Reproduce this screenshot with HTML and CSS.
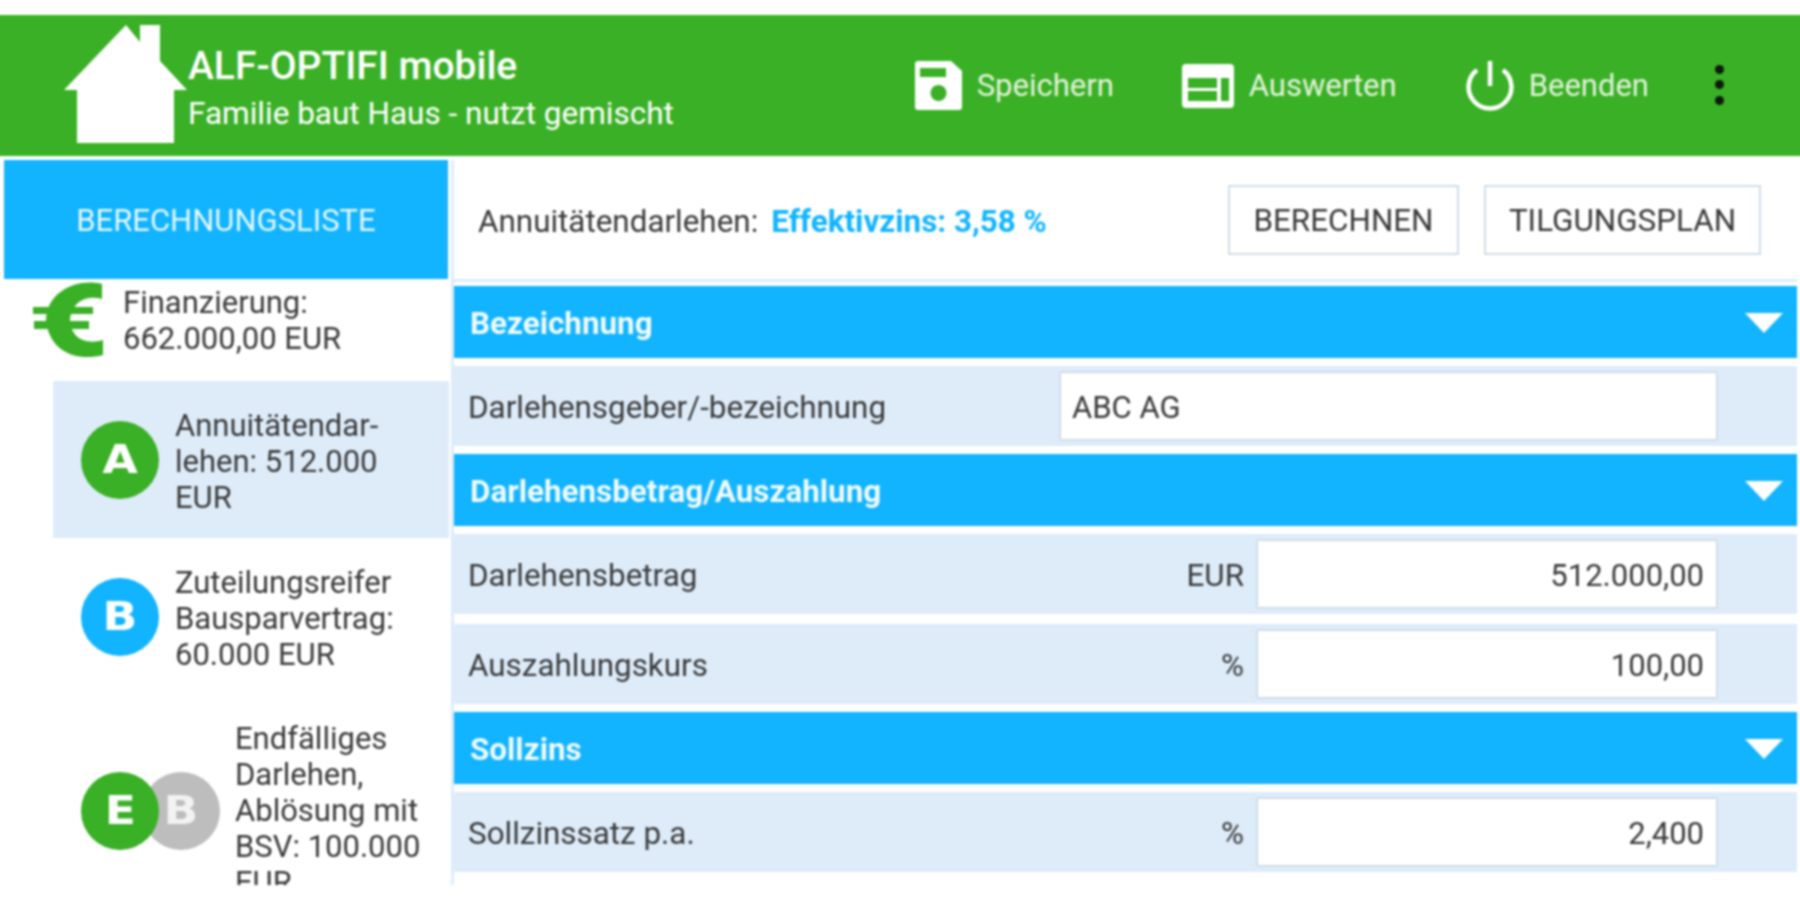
FILE: index.html
```html
<!DOCTYPE html>
<html lang="de">
<head>
<meta charset="utf-8">
<title>ALF-OPTIFI mobile</title>
<link rel="stylesheet" href="styles.css">
</head>
<body>
<div class="app">
  <header class="topbar">
    <svg class="house" viewBox="0 0 123 118"><path d="M0 65 L62 0 L76 17 L76 0 L96 0 L96 36 L123 65 L110 65 L110 118 L13 118 L13 65 Z" fill="#fff"/></svg>
    <div class="brand">
      <div class="brand-title">ALF-OPTIFI mobile</div>
      <div class="brand-sub">Familie baut Haus - nutzt gemischt</div>
    </div>
    <nav class="actions">
      <div class="action action-save">
        <svg class="ico-save" viewBox="0 0 47 49"><path fill-rule="evenodd" fill="#fff" d="M3 0 H36 L47 10 V46 a3 3 0 0 1 -3 3 H3 a3 3 0 0 1 -3 -3 V3 a3 3 0 0 1 3 -3 Z M5 7 V16 H31 V7 Z M23.5 24 a8 8 0 1 0 0.01 0 Z"/></svg>
        <span>Speichern</span>
      </div>
      <div class="action action-eval">
        <svg class="ico-eval" viewBox="0 0 52 44"><path fill-rule="evenodd" fill="#fff" d="M4 0 H48 a4 4 0 0 1 4 4 V40 a4 4 0 0 1 -4 4 H4 a4 4 0 0 1 -4 -4 V4 a4 4 0 0 1 4 -4 Z M6 14 V24 H35 V14 Z M6 27 V37 H35 V27 Z M39 14 V37 H47 V14 Z"/></svg>
        <span>Auswerten</span>
      </div>
      <div class="action action-quit">
        <svg class="ico-power" viewBox="0 0 48 50"><path d="M11 9 A21.400 21.400 0 1 0 37 9" fill="none" stroke="#fff" stroke-width="4.500"/><path d="M24 0 V25" stroke="#fff" stroke-width="4.500"/></svg>
        <span>Beenden</span>
      </div>
      <div class="dots"><i></i><i></i><i></i></div>
    </nav>
  </header>

  <div class="content">
    <aside class="sidebar">
      <div class="list-btn">BERECHNUNGSLISTE</div>
      <div class="total">
        <svg class="euro" viewBox="0 0 71 76"><path fill="#3ab026" d="M69 2 V17 C54 13 39 19 37 38 C38 57 54 63 70 58 V73 C44 80 16 70 13 38 C14 8 46 -4 69 2 Z"/><path fill="#3ab026" d="M0 25 H60 V32 H0 Z M1 39 H56 V47 H1 Z"/></svg>
        <div class="total-text">Finanzierung:<br>662.000,00 EUR</div>
      </div>
      <div class="loan loan-active">
        <div class="badge badge-green"><span class="letter">A</span></div>
        <div class="loan-text">Annuitätendar-<br>lehen: 512.000<br>EUR</div>
      </div>
      <div class="loan">
        <div class="badge badge-blue"><span class="letter">B</span></div>
        <div class="loan-text">Zuteilungsreifer<br>Bausparvertrag:<br>60.000 EUR</div>
      </div>
      <div class="loan loan-double">
        <div class="badge-pair">
          <div class="badge badge-green badge-front"><span class="letter">E</span></div>
          <div class="badge badge-grey"><span class="letter">B</span></div>
        </div>
        <div class="loan-text">Endfälliges<br>Darlehen,<br>Ablösung mit<br>BSV: 100.000<br>EUR</div>
      </div>
    </aside>

    <main class="panel">
      <div class="toolbar">
        <span class="tool-label">Annuitätendarlehen:</span>
        <span class="tool-rate">Effektivzins: 3,58 %</span>
        <button class="btn btn-calc">BERECHNEN</button>
        <button class="btn btn-plan">TILGUNGSPLAN</button>
      </div>

      <div class="section">Bezeichnung<i class="caret"></i></div>
      <div class="row">
        <span class="row-label">Darlehensgeber/-bezeichnung</span>
        <div class="field field-wide">ABC AG</div>
      </div>

      <div class="section">Darlehensbetrag/Auszahlung<i class="caret"></i></div>
      <div class="row">
        <span class="row-label">Darlehensbetrag</span>
        <span class="unit">EUR</span>
        <div class="field">512.000,00</div>
      </div>
      <div class="row">
        <span class="row-label">Auszahlungskurs</span>
        <span class="unit">%</span>
        <div class="field">100,00</div>
      </div>

      <div class="section">Sollzins<i class="caret"></i></div>
      <div class="row">
        <span class="row-label">Sollzinssatz p.a.</span>
        <span class="unit">%</span>
        <div class="field">2,400</div>
      </div>
      <div class="panel-end"></div>
    </main>
  </div>
</div>
</body>
</html>
```

FILE: styles.css
```css
* { box-sizing: border-box; }
html, body { margin: 0; height: 100%; background: #fff; overflow: hidden; }
body { font-family: Roboto, "Liberation Sans", sans-serif; color: #3a3a3a; }
.app { width: 1806px; height: 900px; margin-left: -3px; padding-top: 15px; display: flex; flex-direction: column; filter: blur(0.8px); }

.topbar { height: 141px; flex: none; background: #3ab026; color: #fff; display: flex; align-items: center; padding-left: 67px; padding-right: 3px; }
.house { width: 123px; height: 118px; margin-top: -3px; flex: none; }
.brand { margin-left: 1px; margin-top: 5px; }
.brand-title { font-size: 39px; font-weight: 500; line-height: 44px; }
.brand-sub { font-size: 31.500px; line-height: 36px; margin-top: 8px; }
.actions { margin-left: auto; display: flex; align-items: center; font-size: 31px; color: #e2f3dc; padding-right: 76px; }
.action { display: flex; align-items: center; }
.action span { margin-left: 15px; }
.action-eval { margin-left: 68px; }
.action-quit { margin-left: 69px; }
.ico-save { width: 47px; height: 49px; }
.ico-eval { width: 52px; height: 44px; }
.ico-power { width: 48px; height: 50px; }
.dots { margin-left: 66px; margin-top: -2px; display: flex; flex-direction: column; gap: 6.500px; }
.dots i { display: block; width: 9px; height: 9px; border-radius: 50%; background: #0d1a0d; }

.content { flex: 1; display: flex; height: 729px; padding: 4px 3px 0; max-height: 729px; }
.sidebar { width: 449px; flex: none; height: 725px; overflow: hidden; padding-left: 4px; }
.list-btn { width: 444px; height: 119px; background: #12b4ff; color: #e4f6ff; font-size: 31px; display: flex; align-items: center; justify-content: center; padding-top: 2px; }
.total { display: flex; align-items: flex-start; padding: 3px 0 0 29px; height: 102px; font-size: 31px; line-height: 36px; }
.euro { width: 71px; height: 76px; flex: none; }
.total-text { margin-left: 19px; margin-top: 3px; }
.loan { display: flex; align-items: center; margin-left: 49px; padding-left: 28px; height: 157px; font-size: 31px; line-height: 36px; }
.loan-active { background: #deecfa; }
.loan-double { height: 200px; margin-top: 16px; }
.badge { width: 78px; height: 78px; border-radius: 50%; color: #fff; font-family: "DejaVu Sans", sans-serif; font-weight: 700; font-size: 39px; display: flex; align-items: center; justify-content: center; flex: none; }
.letter { display: block; transform: scaleX(1.17); }
.badge-green { background: #3ab026; }
.badge-blue { background: #12b4ff; }
.badge-grey { background: #bdbdbd; color: #f2f2f2; margin-left: -17px; }
.badge-front { position: relative; z-index: 1; }
.loan-text { margin-left: 16px; margin-top: 4px; }
.badge-pair { display: flex; }
.badge-pair + .loan-text { margin-left: 15px; margin-top: 0; }

.panel { flex: 1; height: 725px; margin-left: 5px; margin-right: 3px; box-shadow: -3px 0 0 #deecfa; overflow: hidden; }
.toolbar { height: 122px; display: flex; align-items: center; font-size: 31.400px; padding-left: 24px; padding-right: 36px; border-bottom: 3px solid #deecfa; margin-bottom: 4px; }
.tool-label, .tool-rate { padding-top: 3px; }
.tool-rate { margin-left: 13px; color: #12b4ff; font-weight: 700; }
.btn { height: 70px; background: #fff; border: 2px solid #d0dde8; font: 31.400px Roboto, sans-serif; color: #3a3a3a; padding: 2px 0 0; }
.btn-calc { width: 231px; margin-left: auto; }
.btn-plan { width: 277px; margin-left: 25px; }

.section { height: 72px; background: #12b4ff; color: #f0faff; font-size: 31.400px; font-weight: 700; display: flex; align-items: center; padding-left: 16px; padding-top: 2px; }
.caret { margin-left: auto; margin-right: 14px; width: 0; height: 0; border-left: 19px solid transparent; border-right: 19px solid transparent; border-top: 20px solid #fff; }
.row { height: 80px; background: #deecfa; margin-top: 8px; display: flex; align-items: center; padding-left: 14px; font-size: 31.400px; padding-right: 81px; }
.row + .section { margin-top: 8px; }
.row + .row { margin-top: 10px; }
.row-label, .unit { padding-top: 2px; }
.unit { margin-left: auto; margin-right: 14px; }
.field { width: 458px; height: 66px; background: #fff; font-size: 31px; box-shadow: 0 0 2px 1px #c4ced6; display: flex; align-items: center; justify-content: flex-end; padding: 2px 12px 0 11px; }
.field-wide { width: 655px; margin-left: auto; justify-content: flex-start; }
.panel-end { height: 3px; margin-top: 14px; background: #deecfa; }
```
